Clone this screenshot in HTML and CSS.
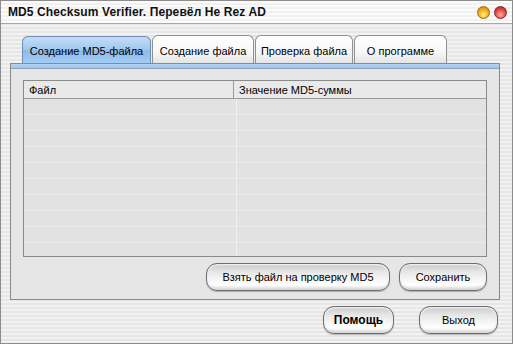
FILE: index.html
```html
<!DOCTYPE html>
<html>
<head>
<meta charset="utf-8">
<link rel="stylesheet" href="styles.css">
</head>
<body>
<div class="window">
  <div class="titlebar">
    <span class="title">MD5 Checksum Verifier. Перевёл He Rez AD</span>
    <div class="tbtns">
      <span class="dot orange"></span>
      <span class="dot red"></span>
    </div>
  </div>
  <div class="main">
    <div class="tabs">
      <div class="tab active t1">Создание MD5-файла</div>
      <div class="tab t2">Создание файла</div>
      <div class="tab t3">Проверка файла</div>
      <div class="tab t4">О программе</div>
    </div>
    <div class="panel">
      <div class="band"></div>
      <div class="list">
        <div class="lhead">
          <div class="hcell c1">Файл</div>
          <div class="hcell c2">Значение MD5-суммы</div>
        </div>
        <div class="lbody">
          <div class="vline"></div>
        </div>
      </div>
      <div class="prow">
        <button class="btn b-check">Взять файл на проверку MD5</button>
        <button class="btn b-save">Сохранить</button>
      </div>
    </div>
    <div class="brow">
      <button class="btn b-help">Помощь</button>
      <button class="btn b-exit">Выход</button>
    </div>
  </div>
</div>
</body>
</html>
```

FILE: styles.css
```css
* { box-sizing: border-box; }
html, body { margin: 0; padding: 0; }
body {
  width: 513px; height: 344px; overflow: hidden;
  font-family: "Liberation Sans", Arial, sans-serif;
  font-size: 11px; color: #000;
}
.window {
  width: 513px; height: 344px;
  border: 1px solid #8c8c8c;
  background: repeating-linear-gradient(to bottom, #f2f2f2 0, #f2f2f2 2px, #e6e6e6 2px, #e6e6e6 4px);
  display: flex; flex-direction: column;
}
.titlebar {
  height: 23px;
  display: flex; align-items: center; justify-content: space-between;
  padding: 0 5px 0 7px;
  background: repeating-linear-gradient(to bottom, #fbfbfb 0, #fbfbfb 2px, #f1f1f1 2px, #f1f1f1 4px);
  border-bottom: 1px solid #a8a8a8;
}
.title { font-weight: bold; font-size: 12px; letter-spacing: 0.1px; color: #111; }
.tbtns { display: flex; gap: 4px; }
.dot {
  width: 13px; height: 13px; border-radius: 50%;
  border: 1px solid #8a6a3a;
}
.orange { background: radial-gradient(circle at 50% 70%, #fff27a 0, #f2b62a 45%, #c97c00 100%); border-color: #9a6a10; }
.red { background: radial-gradient(circle at 50% 70%, #ffb0a8 0, #e45a50 45%, #b01818 100%); border-color: #8a2020; }
.main { flex: 1; display: flex; flex-direction: column; padding-top: 11px; }
.tabs { display: flex; padding-left: 21px; height: 28px; align-items: flex-end; }
.tab {
  height: 28px; padding: 0; white-space: nowrap;
  display: flex; align-items: center; justify-content: center;
  border: 1px solid #909090; border-bottom: none;
  border-radius: 6px 6px 0 0;
  background: linear-gradient(to bottom, #ffffff 0, #f7f7f7 60%, #e4e4e4 100%);
  margin-right: 1px;
  padding-top: 2px;
}
.tab.active {
  height: 27px;
  background: linear-gradient(to bottom, #c4ddf6 0, #a4c9ef 45%, #8cbbea 55%, #a5ccf2 100%);
  border-color: #6f8eb0;
}
.t1 { width: 129px; }
.t2 { width: 102px; }
.t3 { width: 98px; }
.t4 { width: 93px; }
.panel {
  margin-left: 9px; width: 490px; height: 237px;
  border: 1px solid #8a8a8a;
  background: #e6e6e6;
  display: flex; flex-direction: column;
}
.band {
  height: 5px;
  background: linear-gradient(to bottom, #b6d3f1 0, #9cc3ec 100%);
  border-bottom: 1px solid #8fa6be;
}
.list {
  margin: 11px 0 0 12px; width: 464px; height: 177px;
  border: 1px solid #8a8a8a;
  display: flex; flex-direction: column;
  background: #e4e4e4;
}
.lhead { height: 18px; display: flex; border-bottom: 1px solid #9a9a9a; background: #e9e9e9; }
.hcell { display: flex; align-items: center; padding-left: 5px; }
.c1 { width: 210px; border-right: 1px solid #9a9a9a; }
.c2 { flex: 1; }
.lbody {
  flex: 1; position: relative;
  background: repeating-linear-gradient(to bottom, #e2e2e2 0, #e2e2e2 15px, #ebebeb 15px, #ebebeb 16px);
}
.vline { position: absolute; left: 212px; top: 0; bottom: 0; width: 1px; background: #f1f1f1; }
.prow { display: flex; justify-content: flex-end; gap: 9px; padding: 6px 12px 0 0; }
.btn {
  font-family: "Liberation Sans", Arial, sans-serif; font-size: 11px; color: #000;
  height: 28px; border-radius: 11px;
  border: 1px solid #6e6e6e;
  background: linear-gradient(to bottom, #c8c8c8 0, #e6e6e6 30%, #f6f6f6 60%, #ffffff 80%, #e0e0e0 100%);
  box-shadow: inset 0 1px 2px rgba(255,255,255,.9), inset 0 -2px 3px rgba(0,0,0,.08), 0 1px 1px rgba(0,0,0,.25);
  padding: 0; display: flex; align-items: center; justify-content: center;
}
.b-check { width: 184px; }
.b-save { width: 88px; }
.brow { display: flex; justify-content: flex-end; gap: 25px; padding: 6px 14px 0 0; }
.b-help { width: 71px; font-weight: bold; font-size: 12px; }
.b-exit { width: 79px; }
```
